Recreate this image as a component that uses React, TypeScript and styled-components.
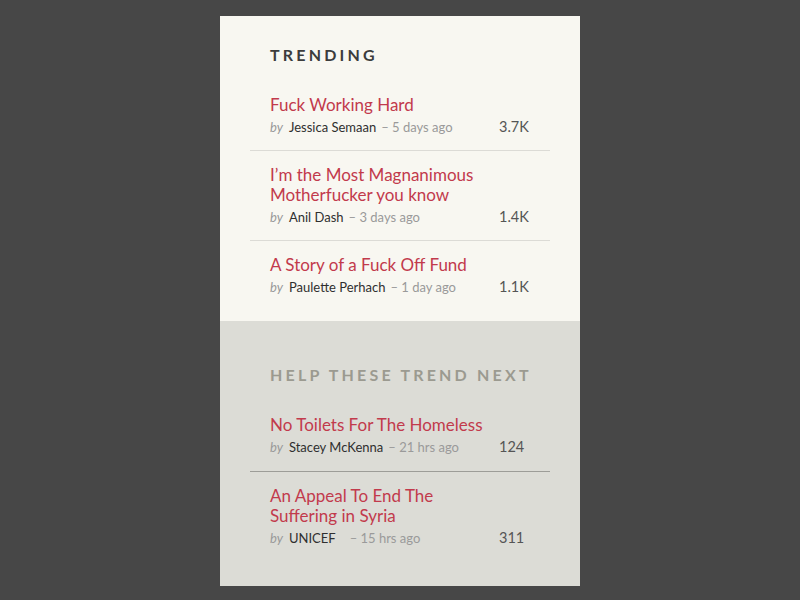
import React from "react";
import styled, { createGlobalStyle } from "styled-components";

const Global = createGlobalStyle`
  html, body { margin: 0; padding: 0; background: #474747; }
  body { font-family: "Lato", "Noto Sans", sans-serif; -webkit-font-smoothing: antialiased; }
`;

const Page = styled.div`
  width: 800px;
  height: 600px;
  padding-top: 16px;
  box-sizing: border-box;
  display: flex;
  justify-content: center;
  align-items: flex-start;
`;

const Card = styled.div`
  width: 360px;
  display: flex;
  flex-direction: column;
`;

const Section = styled.section<{ $alt?: boolean }>`
  background: ${(p) => (p.$alt ? "#dcdcd6" : "#f8f7f1")};
  padding: ${(p) => (p.$alt ? "44px 30px 0" : "29px 30px 0")};
  height: ${(p) => (p.$alt ? "265px" : "305px")};
  box-sizing: border-box;
`;

const Heading = styled.h2<{ $alt?: boolean }>`
  margin: 0 0 30px 20px;
  font-size: 16px;
  font-weight: 700;
  letter-spacing: 3.2px;
  line-height: 20px;
  color: ${(p) => (p.$alt ? "#9b9a90" : "#3c3c3c")};
`;

const Item = styled.div<{ $alt?: boolean; $last?: boolean }>`
  display: flex;
  flex-direction: column;
  padding: 14px 20px ${(p) => (p.$alt ? "14px" : "13px")};
  border-bottom: ${(p) =>
    p.$last ? "none" : p.$alt ? "1px solid #9d9d98" : "1px solid #dcdbd6"};
  &:first-of-type { padding-top: 0; }
`;

const Title = styled.div`
  font-size: 17px;
  line-height: 20px;
  color: #c23a4c;
  width: 215px;
`;

const Meta = styled.div`
  display: flex;
  align-items: baseline;
  margin-top: 2px;
  font-size: 13px;
  line-height: 20px;
`;

const By = styled.span`
  font-style: italic;
  color: #999;
  margin-right: 6px;
`;

const Author = styled.span`
  color: #2f2f2f;
  margin-right: 5px;
`;

const When = styled.span`
  color: #9a9a9a;
  flex: 1;
`;

const Count = styled.span`
  color: #555;
  font-size: 14.5px;
  width: 31px;
`;

type Row = { title: string; author: string; when: string; count: string; pad?: number };

const trending: Row[] = [
  { title: "Fuck Working Hard", author: "Jessica Semaan", when: "5 days ago", count: "3.7K" },
  { title: "I’m the Most Magnanimous Motherfucker you know", author: "Anil Dash", when: "3 days ago", count: "1.4K" },
  { title: "A Story of a Fuck Off Fund", author: "Paulette Perhach", when: "1 day ago", count: "1.1K" },
];

const next: Row[] = [
  { title: "No Toilets For The Homeless", author: "Stacey McKenna", when: "21 hrs ago", count: "124" },
  { title: "An Appeal To End The Suffering in Syria", author: "UNICEF", when: "15 hrs ago", count: "311", pad: 14 },
];

function List({ rows, alt }: { rows: Row[]; alt?: boolean }) {
  return (
    <>
      {rows.map((r, i) => (
        <Item key={r.title} $alt={alt} $last={i === rows.length - 1}>
          <Title>{r.title}</Title>
          <Meta>
            <By>by</By>
            <Author style={r.pad ? { marginRight: r.pad } : undefined}>{r.author}</Author>
            <When>– {r.when}</When>
            <Count>{r.count}</Count>
          </Meta>
        </Item>
      ))}
    </>
  );
}

export default function App() {
  return (
    <>
      <Global />
      <Page>
        <Card>
          <Section>
            <Heading>TRENDING</Heading>
            <List rows={trending} />
          </Section>
          <Section $alt>
            <Heading $alt>HELP THESE TREND NEXT</Heading>
            <List rows={next} alt />
          </Section>
        </Card>
      </Page>
    </>
  );
}
